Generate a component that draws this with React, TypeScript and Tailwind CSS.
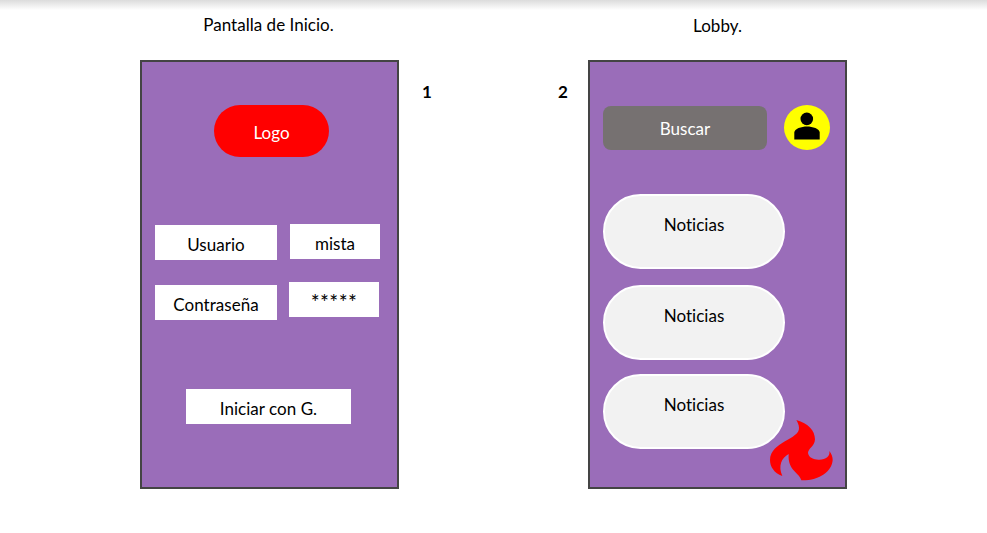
import type { ReactNode } from "react";

function Field({ className, children }: { className: string; children: ReactNode }) {
  return (
    <div className={"flex items-center justify-center bg-white whitespace-nowrap " + className}>
      {children}
    </div>
  );
}

function PersonIcon() {
  return (
    <svg className="h-full w-full" viewBox="0 0 46 45" fill="#000">
      <circle cx="22.8" cy="13.9" r="6.3" />
      <path d="M10.3 34.4V27.6C10.3 23.8 17.5 21.5 23 21.5S35.7 23.8 35.7 27.6V34.4Z" />
    </svg>
  );
}

function Flame() {
  return (
    <svg className="absolute left-[170px] top-[348px] h-[85px] w-[95px]" viewBox="0 0 285 255">
      <path
        fill="#ff0000"
        d="M109 30C145 40 165 62 165 88C164 110 145 114 144 129C146 144 164 150 178 149C198 148 211 139 208 123C215 132 218 141 218 150C216 183 180 212 124 211C119 188 82 182 86 132C64 144 54 168 67 198C42 189 30 170 30 150C31 94 120 88 117 53C117 44 112 36 109 30Z"
      />
    </svg>
  );
}

const news = [
  { title: "Noticias", spacing: "mt-[44px]" },
  { title: "Noticias", spacing: "mt-[16px]" },
  { title: "Noticias", spacing: "mt-[14px]" },
];

export default function App() {
  return (
    <div className="h-[533px] w-[987px] overflow-hidden bg-white font-['Lato',sans-serif] text-[17px] leading-[20px] tracking-[0.03px] text-black">
      <div className="h-[10px] bg-linear-to-b from-[#dcdcdc] to-white" />
      <main className="flex pl-[140px]">
        <section className="w-[259px]">
          <h1 className="flex h-[50px] justify-center pt-[5px] pr-[2px] whitespace-nowrap">Pantalla de Inicio.</h1>
          <div className="h-[429px] border-2 border-[#444444] bg-[#9a6db9] pt-[43px]">
            <div className="ml-[72px] flex h-[52px] w-[115px] items-center justify-center rounded-full bg-[#ff0000] pt-[4px] text-white">
              Logo
            </div>
            <div className="mt-[67px] flex items-start">
              <Field className="mt-px ml-[13px] h-[35px] w-[122px] pt-[5px]">Usuario</Field>
              <Field className="ml-[13px] h-[35px] w-[90px] pt-[5px]">mista</Field>
            </div>
            <div className="mt-[22px] flex items-start">
              <Field className="mt-[3px] ml-[13px] h-[35px] w-[122px] pt-[5px]">Contraseña</Field>
              <Field className="ml-[12px] h-[35px] w-[90px] pt-[5px] text-[21px] tracking-[0.35px]">*****</Field>
            </div>
            <Field className="mt-[69px] ml-[44px] h-[35px] w-[165px] pt-[5px]">Iniciar con G.</Field>
          </div>
        </section>
        <div className="flex w-[189px] justify-between pt-[72px] pr-[20px] pl-[23px] text-[17px] font-bold">
          <span>1</span>
          <span>2</span>
        </div>
        <section className="w-[259px]">
          <h1 className="flex h-[50px] justify-center pt-[6px]">Lobby.</h1>
          <div className="relative h-[429px] border-2 border-[#444444] bg-[#9a6db9] pt-[43px] pl-[13px]">
            <div className="flex items-start">
              <div className="mt-px flex h-[44px] w-[164px] items-center justify-center rounded-[8px] bg-[#767171] pt-[2px] text-white">
                Buscar
              </div>
              <div className="ml-[17px] h-[45px] w-[46px] rounded-[50%] bg-[#ffff00]">
                <PersonIcon />
              </div>
            </div>
            {news.map((item, i) => (
              <div
                key={i}
                className={
                  "flex h-[75px] w-[182px] justify-center rounded-full border-2 border-white bg-[#f2f2f2] pt-[19px] " +
                  item.spacing
                }
              >
                {item.title}
              </div>
            ))}
            <Flame />
          </div>
        </section>
      </main>
    </div>
  );
}
